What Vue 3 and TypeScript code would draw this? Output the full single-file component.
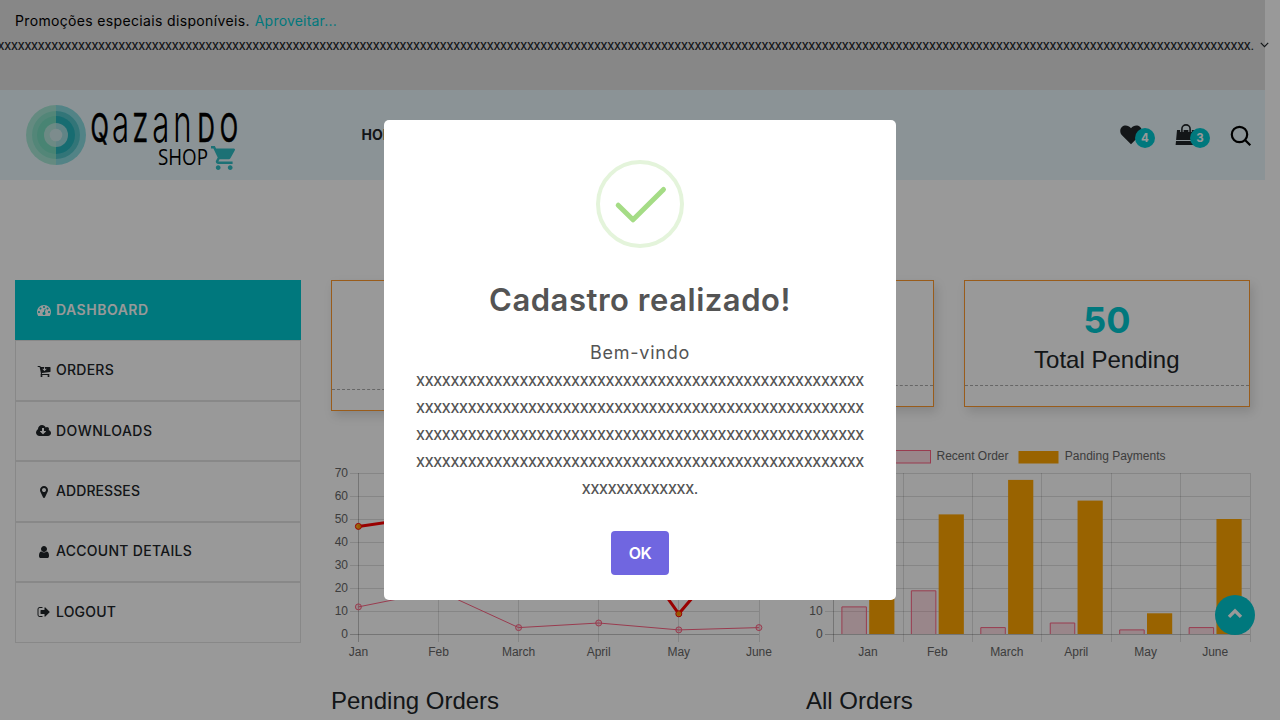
<script setup lang="ts">
interface MenuItem {
  label: string
  icon: string
  box: string
  width: number
  spacing: number
}

const menu: MenuItem[] = [
  {
    label: 'DASHBOARD', box: '0 0 1792 1792', width: 14, spacing: 0.51,
    icon: 'M384 1152q0-53-37.5-90.5t-90.5-37.5-90.5 37.5-37.5 90.5 37.5 90.5 90.5 37.5 90.5-37.5 37.5-90.5zm192-448q0-53-37.5-90.5t-90.5-37.5-90.5 37.5-37.5 90.5 37.5 90.5 90.5 37.5 90.5-37.5 37.5-90.5zm428 481l101-382q6-26-7.5-48.5t-38.5-29.5-48 6.5-30 39.5l-101 382q-60 5-107 43.5t-63 98.5q-20 77 20 146t117 89 146-20 89-117q16-60-6-117t-72-91zm660-33q0-53-37.5-90.5t-90.5-37.5-90.5 37.5-37.5 90.5 37.5 90.5 90.5 37.5 90.5-37.5 37.5-90.5zm-640-640q0-53-37.5-90.5t-90.5-37.5-90.5 37.5-37.5 90.5 37.5 90.5 90.5 37.5 90.5-37.5 37.5-90.5zm448 192q0-53-37.5-90.5t-90.5-37.5-90.5 37.5-37.5 90.5 37.5 90.5 90.5 37.5 90.5-37.5 37.5-90.5zm320 448q0 261-141 483-19 29-54 29h-1402q-35 0-54-29-141-221-141-483 0-182 71-348t191-286 286-191 348-71 348 71 286 191 191 286 71 348z',
  },
  {
    label: 'ORDERS', box: '0 0 1792 1792', width: 14, spacing: 0.25,
    icon: 'M1216 640q0-26-19-45t-45-19-45 19l-83 82v-229q0-26-19-45t-45-19-45 19-19 45v229l-83-82q-19-19-45-19t-45 19-19 45 19 45l192 192q19 19 45 19t45-19l192-192q19-19 19-45zm-512 896q0 53-37.5 90.5t-90.5 37.5-90.5-37.5-37.5-90.5 37.5-90.5 90.5-37.5 90.5 37.5 37.5 90.5zm896 0q0 53-37.5 90.5t-90.5 37.5-90.5-37.5-37.5-90.5 37.5-90.5 90.5-37.5 90.5 37.5 37.5 90.5zm128-1088v512q0 24-16 42.5t-41 21.5l-1044 122q1 7 4.5 21.5t6 26.5 2.5 22q0 16-24 64h920q26 0 45 19t19 45-19 45-45 19h-1024q-26 0-45-19t-19-45q0-14 11-39.5t29.5-59.5 20.5-38l-177-823h-204q-26 0-45-19t-19-45 19-45 45-19h256q16 0 28.5 6.5t20 15.5 13 24.5 7.5 26.5 5.5 29.5 4.5 25.5h1201q26 0 45 19t19 45z',
  },
  {
    label: 'DOWNLOADS', box: '64 0 1920 1792', width: 15, spacing: 0.48,
    icon: 'M1344 928q0-14-9-23t-23-9h-224v-352q0-13-9.5-22.5t-22.5-9.5h-192q-13 0-22.5 9.5t-9.5 22.5v352h-224q-13 0-22.5 9.5t-9.5 22.5q0 14 9 23l352 352q9 9 23 9t23-9l351-351q10-12 10-24zm640 224q0 159-112.5 271.5t-271.5 112.5h-1088q-185 0-316.5-131.5t-131.5-316.5q0-130 70-240t188-165q-2-30-2-43 0-212 150-362t362-150q156 0 285.5 87t188.5 231q71-62 166-62 106 0 181 75t75 181q0 76-41 138 130 31 213.5 135.5t83.5 238.5z',
  },
  {
    label: 'ADDRESSES', box: '0 0 1792 1792', width: 14, spacing: 0.09,
    icon: 'M1152 640q0-106-75-181t-181-75-181 75-75 181 75 181 181 75 181-75 75-181zm256 0q0 109-33 179l-364 774q-16 33-47.5 52t-67.5 19-67.5-19-46.5-52l-365-774q-33-70-33-179 0-212 150-362t362-150 362 150 150 362z',
  },
  {
    label: 'ACCOUNT DETAILS', box: '0 0 1792 1792', width: 14, spacing: 0.29,
    icon: 'M1536 1399q0 109-62.5 187t-150.5 78h-854q-88 0-150.5-78t-62.5-187q0-85 8.5-160.5t31.5-152 58.5-131 94-89 134.5-34.5q131 128 313 128t313-128q76 0 134.5 34.5t94 89 58.5 131 31.5 152 8.5 160.5zm-256-887q0 159-112.5 271.5t-271.5 112.5-271.5-112.5-112.5-271.5 112.5-271.5 271.5-112.5 271.5 112.5 112.5 271.5z',
  },
  {
    label: 'LOGOUT', box: '0 0 1792 1792', width: 14, spacing: 0.17,
    icon: 'M704 1440q0 4 1 20t.5 26.5-3 23.5-10 19.5-20.5 6.5h-320q-119 0-203.5-84.5t-84.5-203.5v-704q0-119 84.5-203.5t203.5-84.5h320q13 0 22.5 9.5t9.5 22.5q0 4 1 20t.5 26.5-3 23.5-10 19.5-20.5 6.5h-320q-66 0-113 47t-47 113v704q0 66 47 113t113 47h312l11.5 1 11.5 3 8 5.5 7 9 2 13.5zm928-544q0 26-19 45l-544 544q-19 19-45 19t-45-19-19-45v-288h-448q-26 0-45-19t-19-45v-384q0-26 19-45t45-19h448v-288q0-26 19-45t45-19 45 19l544 544q19 19 19 45z',
  },
]

const months = ['Jan', 'Feb', 'March', 'April', 'May', 'June']
const recent = [12, 19, 3, 5, 2, 3]
const pending = [47, 52, 67, 58, 9, 50]
const ticks = [0, 10, 20, 30, 40, 50, 60, 70]

// Chart geometry, in the local coordinates of each 445 x 222 drawing.
const yOf = (v: number): number => 193.5 - v * 2.3
const gridY = (v: number): number => Math.round(193 - v * 2.3) + 0.5
const lineX = (i: number): number => 27.4 + i * 80.1
const lineGridX = (i: number): number => Math.round(27 + i * 80.1) + 0.5
const barX = (i: number): number => 27.2 + i * 69.45
const barGridX = (i: number): number => Math.round(27.2 + i * 69.4) + 0.5
const polyline = (data: number[]): string => data.map((v, i) => `${lineX(i)},${yOf(v)}`).join(' ')

const filler = 'x'.repeat(221)
const userName = `${filler}.`
const nameLines = [0, 1, 2, 3, 4].map((n) => userName.slice(n * 52, n * 52 + 52))
</script>

<template>
  <div class="screen">
    <div class="page">
      <div class="topbar">
        <div class="promo">
          <span class="promo-text">Promoções especiais disponíveis.</span>
          <a class="promo-link">Aproveitar...</a>
        </div>
        <div class="account">
          <span class="account-name">{{ userName }}</span>
          <svg class="caret" viewBox="0 0 9 6"><path d="M.8 .9 4.5 4.6 8.2 .9" /></svg>
        </div>
      </div>

      <header class="header">
        <svg class="logo" viewBox="0 0 230 90">
          <g transform="translate(36 45)">
            <path d="M0-30A30 30 0 0 1 0 30z" fill="#89dbe0" />
            <path d="M0-30A30 30 0 0 0 0 30z" fill="#a7e7d6" />
            <path d="M0-24A24 24 0 0 1 0 24z" fill="#54c4c9" />
            <path d="M0-24A24 24 0 0 0 0 24z" fill="#8be0c9" />
            <path d="M0-19A19 19 0 0 1 0 19z" fill="#27b4bc" />
            <path d="M0-19A19 19 0 0 0 0 19z" fill="#79dcc0" />
            <path d="M0-12A12 12 0 0 1 0 12z" fill="#a2dcdf" />
            <path d="M0-12A12 12 0 0 0 0 12z" fill="#b4e6dc" />
            <circle r="6.300" fill="#d0eaec" />
          </g>
          <text class="brand" transform="translate(0 51.800) scale(.6 1)"><tspan class="cap" x="117.500">Q</tspan><tspan class="low" x="153.500">a</tspan><tspan class="cap" x="188">Z</tspan><tspan class="low" x="220.500">a</tspan><tspan class="low" x="255.500">n</tspan><tspan class="cap" x="296">D</tspan><tspan class="cap" x="333">O</tspan></text>
          <text class="brand-sub" x="138" y="75" textLength="50" lengthAdjust="spacingAndGlyphs">SHOP</text>
          <path transform="translate(189.8 53.6) scale(1.2)" fill="#2fbcc4" d="M7 18c-1.1 0-1.99.9-1.99 2S5.9 22 7 22s2-.9 2-2-.9-2-2-2zM1 2v2h2l3.6 7.59-1.35 2.45c-.16.28-.25.61-.25.96 0 1.1.9 2 2 2h12v-2H7.42c-.14 0-.25-.11-.25-.25l.03-.12.9-1.63h7.45c.75 0 1.41-.41 1.75-1.03l3.58-6.49A1.003 1.003 0 0 0 20 4H5.21l-.94-2H1zm16 16c-1.1 0-1.99.9-1.99 2s.89 2 1.99 2 2-.9 2-2-.9-2-2-2z" />
        </svg>
        <nav class="nav"><a>HOME</a></nav>
        <div class="tools">
          <div class="tool">
            <svg class="heart" viewBox="0 0 22 20"><path d="M11 19.2 2.2 10.6C-.4 7.800-.3 4 1.900 2 4.400-.3 8.500.1 11 3.200 13.500.1 17.600-.3 20.100 2c2.200 2 2.300 5.800-.3 8.600z" /></svg>
            <span class="badge">4</span>
          </div>
          <div class="tool">
            <svg class="bag" viewBox="0 0 22 22">
              <path d="M2 6h18l.9 9.900H1.100zM1 16.900h20l.4 4.200H.6z" />
              <path class="handle-gap" d="M6.900 8V5a4.100 4.100 0 0 1 8.200 0v3" />
              <path class="handle" d="M6.900 8.200V5a4.100 4.100 0 0 1 8.200 0v3.200" />
            </svg>
            <span class="badge">3</span>
          </div>
          <svg class="search" viewBox="0 0 22 22"><circle cx="9.500" cy="9.500" r="7.700" /><path d="m15 15 5.300 5.300" /></svg>
        </div>
      </header>

      <main class="main">
        <ul class="menu">
          <li v-for="(item, i) in menu" :key="item.label" class="menu-item" :class="{ active: i === 0 }">
            <span class="menu-icon">
              <svg :viewBox="item.box" :width="item.width" height="14"><path :d="item.icon" /></svg>
            </span>
            <span class="menu-label" :style="{ letterSpacing: item.spacing + 'px' }">{{ item.label }}</span>
          </li>
        </ul>

        <section class="content">
          <div class="cards">
            <div class="card card-tall"><div class="card-body"></div></div>
            <div class="card"><div class="card-body"></div></div>
            <div class="card">
              <div class="card-body">
                <strong class="count">50</strong>
                <span class="caption">Total Pending</span>
              </div>
            </div>
          </div>

          <div class="charts">
            <div class="column">
              <svg class="chart" viewBox="0 0 445 222">
                <g class="grid">
                  <path v-for="t in ticks" :key="t" :class="{ zero: t === 0 }" :d="`M19 ${gridY(t)}H428`" />
                  <path v-for="(m, i) in months" :key="m" :class="{ zero: i === 0 }" :d="`M${lineGridX(i)} 32V201`" />
                </g>
                <text v-for="t in ticks" :key="t" class="tick end" x="17" :y="gridY(t) + 3.300">{{ t }}</text>
                <text v-for="(m, i) in months" :key="m" class="tick mid" :x="lineX(i)" y="215">{{ m }}</text>
                <polyline class="line-pending" :points="polyline(pending)" />
                <circle v-for="(v, i) in pending" :key="i" class="dot-pending" :cx="lineX(i)" :cy="yOf(v)" r="3" />
                <polyline class="line-recent" :points="polyline(recent)" />
                <circle v-for="(v, i) in recent" :key="i" class="dot-recent" :cx="lineX(i)" :cy="yOf(v)" r="3" />
              </svg>
              <h4 class="heading">Pending Orders</h4>
            </div>
            <div class="column">
              <svg class="chart" viewBox="0 0 445 222">
                <rect class="bar-recent" x="84.500" y="9.500" width="40" height="12.500" />
                <text class="tick" x="130.500" y="19">Recent Order</text>
                <rect class="bar-pending" x="212.500" y="10" width="40" height="12.500" />
                <text class="tick" x="258.800" y="19">Panding Payments</text>
                <g class="grid">
                  <path v-for="t in ticks" :key="t" :class="{ zero: t === 0 }" :d="`M19 ${gridY(t)}H444`" />
                  <path v-for="i in 7" :key="i" :class="{ zero: i === 1 }" :d="`M${barGridX(i - 1)} 32V201`" />
                </g>
                <text v-for="t in ticks.slice(0, 2)" :key="t" class="tick end" x="16.600" :y="gridY(t) + 3.300">{{ t }}</text>
                <g v-for="(m, i) in months" :key="m">
                  <text class="tick mid" :x="barX(i) + 34.700" y="215">{{ m }}</text>
                  <path class="bar-recent" :d="`M${barX(i) + 8.700} 193V${yOf(recent[i])}h24.500V193`" />
                  <rect class="bar-pending" :x="barX(i) + 36" :y="yOf(pending[i]) - 0.500" width="25.200" :height="pending[i] * 2.3" />
                </g>
              </svg>
              <h4 class="heading">All Orders</h4>
            </div>
          </div>
        </section>
      </main>

      <button class="to-top" type="button">
        <svg viewBox="0 0 16 11"><path d="m2 8.900 6-6 6 6" /></svg>
      </button>
    </div>

    <div class="overlay">
      <div class="modal">
        <svg class="success" viewBox="0 0 88 88">
          <circle cx="44" cy="44" r="42" />
          <path d="M22.200 45.200 37 59.800 67.500 29.500" />
        </svg>
        <h2 class="modal-title">Cadastro realizado!</h2>
        <div class="modal-text">
          <p class="greeting">Bem-vindo</p>
          <p v-for="(line, i) in nameLines" :key="i">{{ line }}</p>
        </div>
        <button class="ok" type="button">OK</button>
      </div>
    </div>
  </div>
</template>

<style>
body { overflow: hidden; background: #fff; }
</style>

<style scoped>
* { box-sizing: border-box; }
.screen {
  position: relative;
  width: 1280px;
  height: 720px;
  overflow: hidden;
  font-family: Inter, "Liberation Sans", sans-serif;
  color: #212529;
}
.page { width: 1265px; height: 720px; }
.topbar {
  height: 90px;
  background: #e1e1e1;
  font-size: 14px;
}
.promo { height: 32px; padding: 9px 15px 0; line-height: 24px; display: flex; gap: 5px; color: #000; }
.promo-text { letter-spacing: 0.345px; }
.promo-link { letter-spacing: 0.200px; color: #00c8d0; }
.account {
  display: flex;
  justify-content: flex-end;
  align-items: center;
  height: 25px;
  margin-right: -4px;
  gap: 6px;
}
.account-name {
  font-family: Roboto, "Liberation Sans", sans-serif;
  letter-spacing: -0.245px;
  white-space: nowrap;
}
.caret { width: 9px; height: 6px; flex: none; margin-top: 1px; }
.caret path { fill: none; stroke: #212529; stroke-width: 1.200; }

.header { display: flex; height: 90px; background: #e8f6fa; }
.logo { width: 230px; height: 90px; margin-left: 20px; flex: none; }
.brand { font-family: Inter, sans-serif; font-weight: 400; fill: #000; stroke: #000; }
.cap { font-size: 40px; stroke-width: 0.600px; }
.low { font-size: 52px; font-weight: 300; stroke-width: 0; }
.brand-sub { font-family: "Open Sans", sans-serif; font-size: 21px; fill: #000; }
.nav { margin-left: 111.500px; line-height: 90px; font-size: 14px; font-weight: 700; }
.tools { display: flex; align-items: center; margin-left: auto; padding-right: 14px; }
.tool { position: relative; width: 55px; height: 26px; }
.heart { display: block; width: 22px; height: 20px; margin-top: 3px; fill: #212529; }
.bag { display: block; width: 22px; height: 22px; margin-top: 2px; fill: #212529; }
.handle { fill: none; stroke: #212529; stroke-width: 1.600; }
.handle-gap { fill: none; stroke: #e8f6fa; stroke-width: 3.400; }
.badge {
  position: absolute;
  left: 15px;
  top: 6px;
  width: 20px;
  height: 20px;
  border-radius: 50%;
  background: #00c8d0;
  color: #fff;
  font-size: 11.500px;
  font-weight: 700;
  line-height: 20px;
  text-align: center;
}
.search { width: 22px; height: 22px; margin-right: -1px; margin-top: 2px; }
.search circle, .search path { fill: none; stroke: #000; stroke-width: 2.200; }

.main { display: flex; gap: 30px; padding: 100px 15px 0; }
.menu { width: 286px; margin: 0; padding: 0; list-style: none; flex: none; }
.menu-item {
  display: flex;
  align-items: center;
  height: 60.450px;
  padding: 0 19px;
  border: 1px solid #e3e3e3;
  font-size: 14px;
  font-weight: 500;
  gap: 3px;
}
.menu-item.active { background: #00c8d0; border-color: #00c8d0; color: #fff; font-weight: 600; }
.menu-icon { display: flex; justify-content: center; width: 18px; margin-left: -0.500px; margin-right: 0.500px; }
.menu-icon svg { fill: currentColor; display: block; }
.menu-label { padding-bottom: 2px; }

.content { width: 919px; flex: none; }
.cards { display: flex; gap: 30px; height: 161px; align-items: flex-start; }
.card {
  flex: 1 1 0;
  height: 127px;
  border: 1px solid #ff992d;
  box-shadow: 3px 5px 10px rgba(0, 0, 0, 0.130);
}
.card-body {
  display: flex;
  flex-direction: column;
  align-items: center;
  height: 105px;
  padding-top: 15px;
  border-bottom: 1px dashed #aaa;
}
.card-tall { height: 131px; }
.card-tall .card-body { height: 109px; }
.count { font-size: 36px; font-weight: 700; line-height: 48px; color: #00c8d0; }
.caption { font: 24px/32px "Liberation Sans", Arial, sans-serif; }

.charts { display: flex; gap: 30px; }
.column { width: 445px; flex: none; }
.chart { display: block; width: 445px; height: 222px; }
.grid path { fill: none; stroke: rgba(0, 0, 0, 0.120); }
.grid .zero { stroke: rgba(0, 0, 0, 0.230); }
.tick { font-family: "Liberation Sans", Arial, sans-serif; font-size: 12px; fill: #666; }
.end { text-anchor: end; }
.mid { text-anchor: middle; }
.line-pending { fill: none; stroke: #f00; stroke-width: 3; }
.dot-pending { fill: #ffa500; fill-opacity: 0.900; stroke: #f00; stroke-width: 1; }
.line-recent { fill: none; stroke: #ff6384; stroke-width: 1; }
.dot-recent { fill: rgba(255, 99, 132, 0.200); stroke: #ff6384; stroke-width: 1; }
.bar-recent { fill: rgba(255, 99, 132, 0.200); stroke: #ff6384; stroke-width: 1; }
.bar-pending { fill: #ffa500; }
.heading { margin: 22px 0 0; font: 400 24px/32px "Liberation Sans", Arial, sans-serif; }

.to-top {
  position: absolute;
  left: 1215px;
  top: 595px;
  display: flex;
  align-items: center;
  justify-content: center;
  width: 40px;
  height: 40px;
  padding: 0;
  border: 0;
  border-radius: 50%;
  background: #00c8d0;
}
.to-top svg { width: 16px; height: 11px; margin-top: -4px; }
.to-top path { fill: none; stroke: #fff; stroke-width: 3.400; }

.overlay {
  position: absolute;
  inset: 0;
  display: flex;
  align-items: center;
  justify-content: center;
  background: rgba(0, 0, 0, 0.400);
}
.modal {
  display: flex;
  flex-direction: column;
  align-items: center;
  width: 512px;
  height: 480px;
  padding-top: 40px;
  border-radius: 5px;
  background: #fff;
}
.success { width: 88px; height: 88px; }
.success circle { fill: none; stroke: #e4f4db; stroke-width: 4; }
.success path { fill: none; stroke: #a5dc86; stroke-width: 5; stroke-linecap: round; stroke-linejoin: round; }
.modal-title {
  margin: 32px 0 0;
  color: #545454;
  font-size: 31px;
  font-weight: 600;
  line-height: 40px;
  letter-spacing: 0.530px;
}
.modal-text {
  margin-top: 19px;
  color: #545454;
  font-family: Roboto, sans-serif;
  font-size: 18px;
  line-height: 27px;
  letter-spacing: -0.315px;
  text-align: center;
  white-space: nowrap;
}
.modal-text p { margin: 0; }
.modal-text .greeting { font-family: Inter, sans-serif; letter-spacing: 0.750px; }
.ok {
  width: 58px;
  height: 44px;
  margin-top: 30px;
  padding: 0 0 1px;
  border: 0;
  border-radius: 4px;
  background: #7066e0;
  color: #fff;
  font-family: Inter, sans-serif;
  font-size: 16px;
  font-weight: 600;
  letter-spacing: -0.400px;
}
</style>
